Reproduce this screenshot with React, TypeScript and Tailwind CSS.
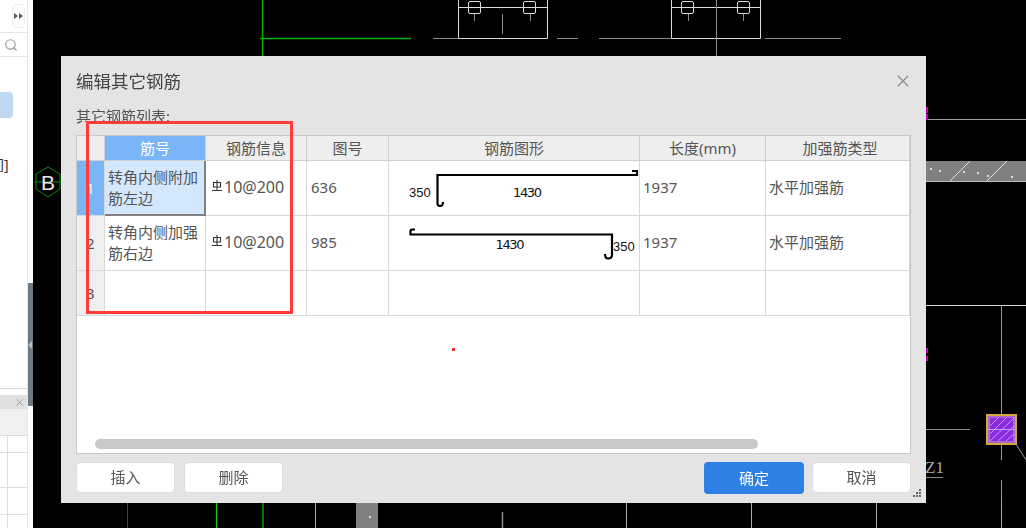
import React from "react";
import { X, Search } from "lucide-react";

const FONT = "font-['Noto_Sans','Noto_Sans_CJK_SC',sans-serif]";
const COLS = "grid grid-cols-[28px_101px_101px_82px_251px_126px_1fr]";
const CELL = "border-r border-b border-[#d8d8d8] flex items-center";

const RebarMark = () => (
  <svg width="12" height="14" viewBox="0 0 12 14" className="mr-[1px] mb-[3px] shrink-0" fill="none" stroke="#333" strokeWidth="1.1">
    <path d="M2.5 3.5h7v4.5h-7zM6 1v10.5M1 11.5h10" />
  </svg>
);

const Canvas = () => (
  <svg className="absolute inset-0" width="1026" height="528" viewBox="0 0 1026 528" fill="none">
    {/* green axis */}
    <path d="M262.5 0V56M260 38.5H411" stroke="#00b000" strokeWidth="1.5" />
    <path d="M216.5 503V528" stroke="#18d018" strokeWidth="1.2" />
    <path d="M263 503V528" stroke="#0a9a0a" strokeWidth="1.5" />
    <path d="M127.5 503V528" stroke="#0a6a0a" />
    {/* top details */}
    <g stroke="#dcdcdc" strokeWidth="1">
      <path d="M458.5 0V38.5H547.5V0M458 7.5H547" />
      <path d="M671.5 0V38.5H760.5V0M671 7.5H760" />
      <rect x="468.5" y="1.5" width="12" height="12" rx="1.5" />
      <rect x="523.5" y="1.5" width="12" height="12" rx="1.5" />
      <rect x="681.5" y="1.5" width="12" height="12" rx="1.5" />
      <rect x="737.5" y="1.5" width="12" height="12" rx="1.5" />
    </g>
    <g stroke="#8c8c8c">
      <path d="M433 38.5H458M557 38.5H578M599 38.5H671M765 38.5H841M502.5 14V34M716.5 0V56M474.5 14V21M530.5 14V21M688.5 14V21M743.5 14V21" />
    </g>
    {/* right side */}
    <path d="M926 119.5H1026" stroke="#999" />
    <rect x="926" y="161" width="100" height="21" fill="#808080" />
    <path d="M926 181.5H1026" stroke="#bbb" />
    <path d="M950 181L970 161M987 181L1007 161" stroke="#e0e0e0" />
    <g fill="#ddd">
      <rect x="930" y="168" width="2" height="2" />
      <rect x="939" y="170" width="2" height="2" />
      <rect x="963" y="171" width="2" height="2" />
      <rect x="977" y="172" width="2" height="2" />
      <rect x="987" y="175" width="2" height="2" />
      <rect x="1011" y="176" width="2" height="2" />
    </g>
    <path d="M926 305.5H1026" stroke="#d8d8d8" />
    <path d="M1001.5 305V460M1001.5 480V528" stroke="#9a9a9a" />
    <path d="M926 429.5H970M926 477.5H943" stroke="#8a8a8a" />
    <text x="925" y="473" fill="#aaa" fontSize="17" fontFamily="'Liberation Serif'">Z1</text>
    <rect x="987" y="415" width="29" height="29" fill="#8a2be2" stroke="#d4a93c" strokeWidth="2" />
    <rect x="989" y="417" width="25" height="25" stroke="#c9a0c0" />
    <path d="M990 441L1014 418M990 434L1006 418M990 426L998 418M998 441L1014 426M1006 441L1014 434" stroke="#c79cf0" />
    <path d="M988 429.5H1015" stroke="#c0a0e0" />
    <path d="M1016 444L1026 460" stroke="#999" />
    <g fill="#c000c0">
      <rect x="926" y="107" width="2" height="6" />
      <rect x="926" y="114" width="2" height="6" />
      <rect x="926" y="348" width="2" height="5" />
      <rect x="926" y="356" width="2" height="5" />
    </g>
    {/* axis bubble */}
    <path d="M48 167L60 174V189L48 197L36 189V174Z" stroke="#0a8a0a" />
    <path d="M34 182H61" stroke="#0a8a0a" />
    <text x="41" y="190" fill="#e8e8e8" fontSize="21" fontFamily="'Liberation Sans'">B</text>
    {/* below dialog */}
    <path d="M315.5 503V528M626.5 503V528M751.5 503V528M876.5 503V528M1001.5 503V528" stroke="#aaa" />
    <path d="M502.5 512V528" stroke="#888" strokeWidth="1.5" />
    <rect x="356" y="503" width="22" height="25" fill="#808080" />
    <rect x="369" y="516" width="2" height="2" fill="#ddd" />
  </svg>
);

const LeftPanel = () => (
  <div className="relative z-10 w-[33px] h-full shrink-0 bg-white flex">
    <div className="w-[28px] h-full flex flex-col border-r border-[#e6e6e6] overflow-hidden">
      <div className="h-[33px] shrink-0 flex justify-end items-center pr-[2px] border-b border-[#e6e6e6]">
        <div className="w-[13px] h-[24px] rounded-[4px] border border-[#eeeeee] flex items-center justify-center">
          <svg width="9" height="6" viewBox="0 0 9 6" fill="#555a68">
            <path d="M0 0L4 3L0 6ZM5 0L9 3L5 6Z" />
          </svg>
        </div>
      </div>
      <div className="h-[24px] shrink-0 flex items-center pl-[4px] border-b border-[#e6e6e6]">
        <Search size={14} color="#9a9a9a" strokeWidth={2} />
      </div>
      <div className="h-[331px] shrink-0">
        <div className="mt-[35px] w-[13px] h-[26px] bg-[#bfd9f5] rounded-r-[4px]" />
        <div className={`mt-[38px] -ml-[10px] text-[14px] leading-[18px] text-[#333] ${FONT}`}>间]</div>
      </div>
      <div className="h-[7px] shrink-0 border-t border-[#d8d8d8]" />
      <div className="h-[14px] shrink-0 bg-[#e0e0e0] flex justify-end items-center pr-[2px]">
        <X size={11} color="#999" />
      </div>
      <div className="h-[27px] shrink-0 bg-[#f1f1f1] border-b border-[#dcdcdc]" />
      <div className="h-[17px] shrink-0 border-b border-[#dddddd]"><div className="w-[8px] h-full border-r border-[#dddddd]" /></div>
      <div className="h-[35px] shrink-0 border-b border-[#dddddd]"><div className="w-[8px] h-full border-r border-[#dddddd]" /></div>
      <div className="h-[27px] shrink-0 border-b border-[#dddddd]"><div className="w-[8px] h-full border-r border-[#dddddd]" /></div>
      <div className="flex-1"><div className="w-[8px] h-full border-r border-[#dddddd]" /></div>
    </div>
    <div className="w-[5px] h-full flex flex-col">
      <div className="h-[283px]" />
      <div className="h-[123px] bg-[#6d7a84] flex items-center">
        <div className="w-0 h-0 border-y-[4px] border-y-transparent border-r-[4px] border-r-[#b5bdc3]" />
      </div>
    </div>
  </div>
);

const HeaderCell = ({ children, active, last }: { children?: React.ReactNode; active?: boolean; last?: boolean }) => (
  <div
    className={`border-r border-b border-[#d0d0d0] flex items-center justify-center text-[15px] ${last ? "pl-[5px]" : ""} ${
      active ? "bg-[#7ab6f7] text-white" : "bg-[#eeeeee] text-[#555]"
    }`}
  >
    {children}
  </div>
);

const RowNo = ({ n, active }: { n: number; active?: boolean }) => (
  <div className={`border-r border-b border-[#d8d8d8] flex items-center pl-[9px] text-[15px] ${active ? "bg-[#7ab6f7] text-white" : "bg-[#efefef] text-[#555]"}`}>
    {n}
  </div>
);

const ShapeOne = () => (
  <svg width="250" height="54" viewBox="0 0 250 54" fill="none" className="block">
    <path d="M243 10H248V14H48.5V42Q48.5 45 51 45Q54 45 54 41" stroke="#000" strokeWidth="2.2" />
    <text x="20" y="36" fontSize="13" fill="#111" fontFamily="'Liberation Sans'">350</text>
    <text x="124" y="36" fontSize="13" fill="#111" fontFamily="'DejaVu Sans'" textLength="29">1430</text>
  </svg>
);

const ShapeTwo = () => (
  <svg width="250" height="54" viewBox="0 0 250 54" fill="none" className="block">
    <path d="M26 13.5H23Q21.5 13.5 21.5 15V18.5H223V39Q223 42.5 219 42.5Q216 42.5 216 38" stroke="#000" strokeWidth="2.2" />
    <text x="106.5" y="33" fontSize="13" fill="#111" fontFamily="'DejaVu Sans'" textLength="29">1430</text>
    <text x="224" y="35" fontSize="13" fill="#111" fontFamily="'Liberation Sans'">350</text>
  </svg>
);

const Row = ({
  n,
  name,
  code,
  shape,
  active,
}: {
  n: number;
  name: string;
  code: string;
  shape: React.ReactNode;
  active?: boolean;
}) => (
  <div className={`${COLS} h-[55px] text-[15px] text-[#555]`}>
    <RowNo n={n} active={active} />
    <div className={`${active ? "bg-[#d3e8fd] border-r-2 border-b-2 border-[#808080]" : "border-r border-b border-[#d8d8d8]"} flex items-center pl-[3px] pr-[2px] leading-[21px]`}>
      {name}
    </div>
    <div className={`${CELL} pl-[5px] pb-[2px] text-[16px] text-[#555]`}>
      <RebarMark />
      10@200
    </div>
    <div className={`${CELL} pl-[4px] pb-[2px]`}>{code}</div>
    <div className={CELL}>{shape}</div>
    <div className={`${CELL} pl-[3px] pb-[2px]`}>1937</div>
    <div className={`${CELL} pl-[3px] pb-[2px]`}>水平加强筋</div>
  </div>
);

const Dialog = () => (
  <div className={`absolute left-[61px] top-[56px] w-[865px] h-[447px] bg-[#fdfdfd]/90 backdrop-blur-md flex flex-col px-[15px] ${FONT}`}>
    <div className="h-[50px] shrink-0 flex items-center justify-between">
      <span className="text-[17.5px] text-[#444]">编辑其它钢筋</span>
      <X size={20} color="#8a8a8a" strokeWidth={1.3} className="mr-[-2px]" />
    </div>
    <div className="h-[29px] shrink-0 text-[15px] leading-[20px] text-[#555]">其它钢筋列表:</div>
    <div className="h-[319px] shrink-0 border border-[#c8c8c8] bg-white flex flex-col relative">
      <div className={`${COLS} h-[25px] shrink-0`}>
        <HeaderCell />
        <HeaderCell active>筋号</HeaderCell>
        <HeaderCell>钢筋信息</HeaderCell>
        <HeaderCell>图号</HeaderCell>
        <HeaderCell>钢筋图形</HeaderCell>
        <HeaderCell>长度(mm)</HeaderCell>
        <HeaderCell last>加强筋类型</HeaderCell>
      </div>
      <Row n={1} name="转角内侧附加筋左边" code="636" shape={<ShapeOne />} active />
      <Row n={2} name="转角内侧加强筋右边" code="985" shape={<ShapeTwo />} />
      <div className={`${COLS} h-[45px] text-[15px]`}>
        <RowNo n={3} />
        <div className={CELL} />
        <div className={CELL} />
        <div className={CELL} />
        <div className={CELL} />
        <div className={CELL} />
        <div className={CELL} />
      </div>
      <div className="absolute left-[18px] bottom-[4px] w-[663px] h-[10px] rounded-full bg-[#c9c9c9]" />
    </div>
    <div className="flex-1 flex items-start justify-between pt-[8px]">
      <div className="flex gap-[9px]">
        <button className="w-[99px] h-[31px] bg-white rounded-[4px] border border-[#dcdcdc] text-[15px] text-[#555]">插入</button>
        <button className="w-[99px] h-[31px] bg-white rounded-[4px] border border-[#dcdcdc] text-[15px] text-[#555]">删除</button>
      </div>
      <div className="flex gap-[8px]">
        <button className="w-[100px] h-[32px] bg-[#2f80e4] rounded-[4px] text-[15px] text-white">确定</button>
        <button className="w-[99px] h-[31px] bg-white rounded-[4px] border border-[#dcdcdc] text-[15px] text-[#555]">取消</button>
      </div>
    </div>
    <svg width="10" height="10" viewBox="0 0 10 10" className="absolute right-[4px] bottom-[4px]" fill="#666">
      <rect x="7" y="0" width="2" height="2" />
      <rect x="4" y="3" width="2" height="2" />
      <rect x="7" y="3" width="2" height="2" />
      <rect x="1" y="6" width="2" height="2" />
      <rect x="4" y="6" width="2" height="2" />
      <rect x="7" y="6" width="2" height="2" />
    </svg>
  </div>
);

export default function App() {
  return (
    <div className="relative w-[1026px] h-[528px] overflow-hidden bg-black">
      <LeftPanel />
      <div className="absolute inset-0">
        <Canvas />
        <Dialog />
        <div className="absolute left-[86px] top-[121px] w-[207px] h-[193px] border-[3px] border-[#ff3b3b]" />
        <div className="absolute left-[452px] top-[348px] w-[3px] h-[3px] bg-[#f03030]" />
      </div>
    </div>
  );
}
